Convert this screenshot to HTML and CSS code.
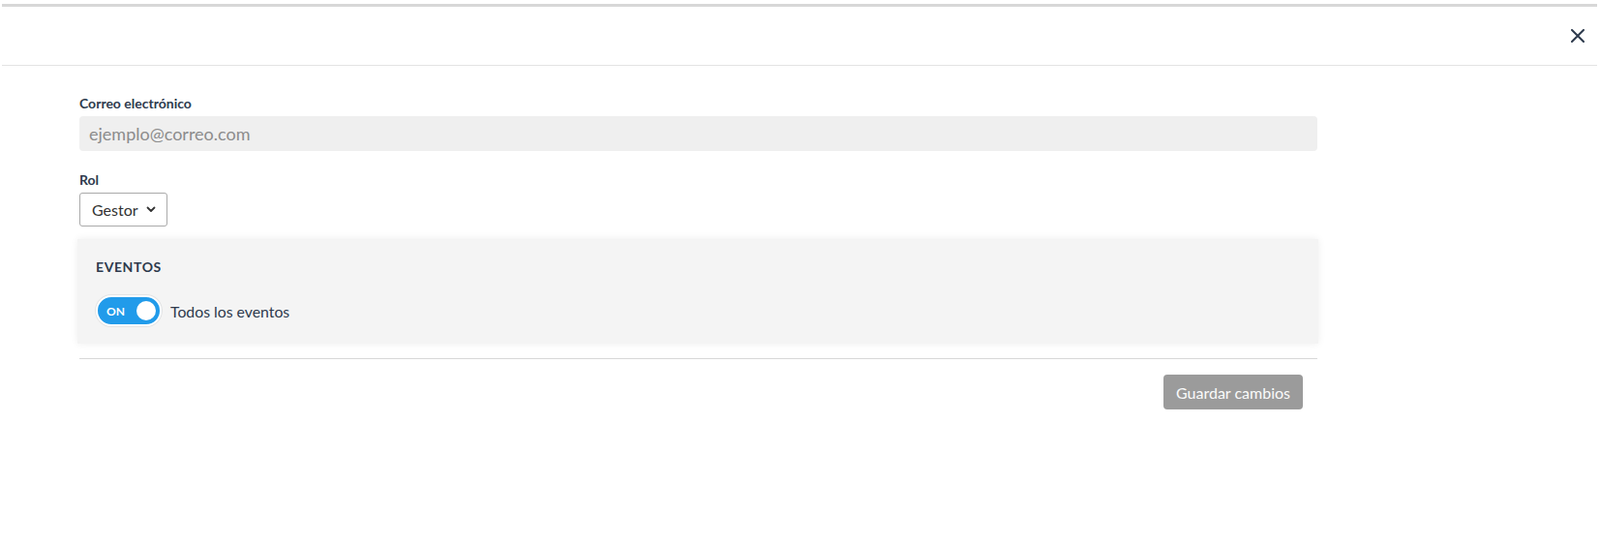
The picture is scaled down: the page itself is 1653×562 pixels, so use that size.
FILE: index.html
```html
<!DOCTYPE html>
<html lang="es">
	<head>
		<meta charset="UTF-8" />
		<meta name="viewport" content="width=device-width, initial-scale=1.0" />
		<title>Editar usuario</title>
		<link rel="stylesheet" href="styles.css">
	</head>
	<body>
		<div class="modal">
			<div class="modal-header">
				<button class="close-button" aria-label="Cerrar">
					<svg width="14" height="14" viewBox="0 0 14 14">
						<path d="M1 1 L13 13 M13 1 L1 13" stroke="#2d3a4d" stroke-width="2" stroke-linecap="round" fill="none" />
					</svg>
				</button>
			</div>

			<div class="modal-body">
				<label class="field-label" for="email">Correo electrónico</label>
				<input class="text-input" id="email" type="text" placeholder="ejemplo@correo.com" disabled />

				<label class="field-label role-label">Rol</label>
				<div class="role-select">
					<span>Gestor</span>
					<svg width="10" height="7" viewBox="0 0 10 7">
						<path d="M1.5 1.5 L5 5 L8.5 1.5" stroke="#333" stroke-width="1.8" fill="none" stroke-linecap="round" stroke-linejoin="round" />
					</svg>
				</div>

				<!-- Events permissions -->
				<div class="events-panel">
					<h3 class="panel-title">EVENTOS</h3>
					<div class="toggle-row">
						<div class="toggle">
							<span class="toggle-text">ON</span>
							<span class="toggle-knob"></span>
						</div>
						<span class="toggle-label">Todos los eventos</span>
					</div>
				</div>

				<hr class="divider" />

				<div class="actions">
					<button class="save-button" disabled>Guardar cambios</button>
				</div>
			</div>
		</div>
	</body>
</html>
```

FILE: styles.css
```css
body {
	font-family: 'Lato', 'Liberation Sans', sans-serif;
	margin: 0;
	padding: 0;
	background: #fff;
	color: #2d3a4d;
}
.modal {
	margin: 4px 3px 0 2px;
	border-top: 3px solid #d7d7d7;
}
.modal-header {
	height: 60px;
	display: flex;
	align-items: center;
	justify-content: flex-end;
	padding-right: 13px;
	border-bottom: 1px solid #e3e3e3;
}
.close-button {
	background: none;
	border: none;
	padding: 0;
	width: 14px;
	height: 14px;
	display: flex;
	cursor: pointer;
}
.modal-body {
	padding: 31px 0 0 80px;
	width: 1279px;
}
.field-label {
	display: block;
	font-size: 14px;
	line-height: 16px;
	font-weight: 700;
	color: #2d3a4d;
	margin-bottom: 5px;
}
.text-input {
	display: block;
	box-sizing: border-box;
	width: 100%;
	height: 36px;
	border: none;
	border-radius: 4px;
	background: #efefef;
	padding: 0 10px;
	font-family: inherit;
	font-size: 18px;
	color: #888;
}
.text-input::placeholder {
	color: #8c8c8c;
}
.role-label {
	margin-top: 22px;
}
.role-select {
	box-sizing: border-box;
	width: 91px;
	height: 35px;
	display: flex;
	align-items: center;
	gap: 8px;
	padding-left: 12px;
	border: 1px solid #aaa;
	border-radius: 3px;
	font-size: 16px;
	color: #333;
}
.events-panel {
	margin: 13px -1px 0 -2px;
	padding: 20px 18px 18px 19px;
	background: #f4f4f4;
	box-shadow: 0 0 8px rgba(0, 0, 0, 0.07);
}
.panel-title {
	margin: 0 0 21px;
	font-size: 14px;
	font-weight: 700;
	letter-spacing: 0.6px;
	color: #2d3a4d;
}
.toggle-row {
	display: flex;
	align-items: center;
	gap: 9px;
}
.toggle {
	box-sizing: border-box;
	width: 68px;
	height: 32px;
	border: 2px solid #fff;
	border-radius: 16px;
	background: #219bea;
	box-shadow: 0 0 0 1px #e4e4e4;
	display: flex;
	align-items: center;
	justify-content: space-between;
	padding: 0 4px 0 9px;
}
.toggle-text {
	color: #fff;
	font-size: 12px;
	font-weight: 700;
}
.toggle-knob {
	width: 20px;
	height: 20px;
	border-radius: 50%;
	background: #fff;
}
.toggle-label {
	font-size: 15.8px;
	color: #2d3a4d;
}
.divider {
	margin: 15px 0 0;
	border: none;
	border-top: 1px solid #d8d8d8;
}
.actions {
	display: flex;
	justify-content: flex-end;
	padding: 16px 15px 0 0;
}
.save-button {
	height: 36px;
	padding: 0 13px;
	border: none;
	border-radius: 4px;
	background: #9b9b9b;
	color: #fafafa;
	font-family: inherit;
	font-size: 16px;
}
```
